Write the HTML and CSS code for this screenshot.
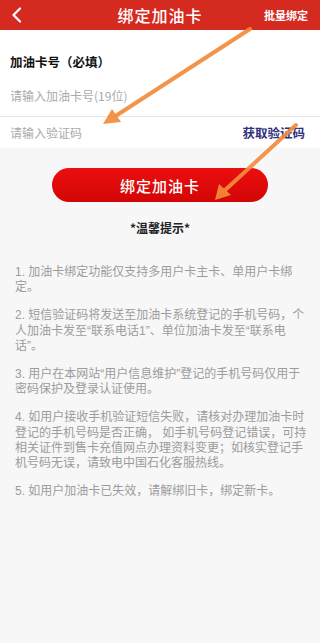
FILE: index.html
```html
<!DOCTYPE html>
<html lang="zh-CN">
<head>
<meta charset="utf-8">
<title>绑定加油卡</title>
<link rel="stylesheet" href="styles.css">
</head>
<body>
<div class="page">
  <header class="topbar">
    <span class="back">
      <svg width="12" height="16" viewBox="0 0 12 16"><path d="M9 1.5 L2.5 8 L9 14.5" fill="none" stroke="#fff" stroke-width="2.2" stroke-linecap="round" stroke-linejoin="round"/></svg>
    </span>
    <h1 class="title">绑定加油卡</h1>
    <span class="batch">批量绑定</span>
  </header>

  <section class="form">
    <div class="label">加油卡号（必填）</div>
    <div class="placeholder card">请输入加油卡号(19位)</div>
    <div class="code-row">
      <span class="placeholder">请输入验证码</span>
      <span class="getcode">获取验证码</span>
    </div>
  </section>

  <div class="btn-wrap">
    <button class="bind-btn">绑定加油卡</button>
  </div>

  <div class="tips-title">*温馨提示*</div>

  <div class="tips">
    <p>1. 加油卡绑定功能仅支持多用户卡主卡、单用户卡绑定。</p>
    <p>2. 短信验证码将发送至加油卡系统登记的手机号码，个人加油卡发至“联系电话1”、单位加油卡发至“联系电话”。</p>
    <p>3. 用户在本网站“用户信息维护”登记的手机号码仅用于密码保护及登录认证使用。</p>
    <p>4. 如用户接收手机验证短信失败，请核对办理加油卡时登记的手机号码是否正确， 如手机号码登记错误，可持相关证件到售卡充值网点办理资料变更；如核实登记手机号码无误，请致电中国石化客服热线。</p>
    <p>5. 如用户加油卡已失效，请解绑旧卡，绑定新卡。</p>
  </div>

  <svg class="annot" width="320" height="643" viewBox="0 0 320 643">
    <g stroke="#f28c3c" stroke-width="4" stroke-linecap="round" fill="#f28c3c" opacity="0.92">
      <line x1="250" y1="29" x2="114" y2="117"/>
      <polygon points="103,124 112,109 121,122" stroke="none"/>
      <line x1="296" y1="125" x2="223" y2="192"/>
      <polygon points="215,200 219,184 231,195" stroke="none"/>
    </g>
  </svg>
</div>
</body>
</html>
```

FILE: styles.css
```css
* { box-sizing: border-box; }
html, body {
  margin: 0;
  padding: 0;
}
body {
  background: #f7f7f7;
  font-family: "Noto Sans CJK SC", "Noto Sans", sans-serif;
  width: 320px;
  height: 643px;
  overflow: hidden;
}
.page {
  position: relative;
  width: 320px;
  height: 643px;
}
.topbar {
  height: 30px;
  background: #d52a20;
  display: grid;
  grid-template-columns: 1fr auto 1fr;
  align-items: center;
  color: #fff;
}
.back {
  display: flex;
  align-items: center;
  padding-left: 11px;
}
.title {
  margin: 0;
  font-size: 16px;
  font-weight: 500;
  letter-spacing: 1px;
  line-height: 30px;
}
.batch {
  justify-self: end;
  padding-right: 12px;
  font-size: 11px;
  font-weight: 700;
}
.form {
  background: #fff;
}
.label {
  padding: 24px 10px 0;
  font-size: 12.5px;
  font-weight: 700;
  color: #111;
  line-height: 16px;
}
.placeholder {
  font-size: 12px;
  color: #aaa;
  line-height: 16px;
}
.card {
  padding: 18px 10px 12px;
  border-bottom: 1px solid #e6e6e6;
}
.code-row {
  height: 31px;
  display: flex;
  align-items: center;
  justify-content: space-between;
  padding: 0 15px 0 10px;
}
.getcode {
  font-size: 12.5px;
  font-weight: 700;
  color: #2e2f7e;
}
.btn-wrap {
  padding: 20px 52px 0;
}
.bind-btn {
  display: block;
  width: 100%;
  height: 34px;
  border: none;
  border-radius: 17px;
  background: linear-gradient(#ec0e0e, #d20606);
  color: #fff;
  font-family: inherit;
  font-size: 15px;
  font-weight: 500;
  letter-spacing: 1px;
}
.tips-title {
  margin-top: 18px;
  text-align: center;
  font-size: 12px;
  font-weight: 700;
  color: #222;
  line-height: 16px;
}
.tips {
  padding: 29px 12px 0 15px;
  color: #9c9c9c;
  font-family: "Liberation Sans", "Noto Sans CJK SC", sans-serif;
  font-size: 12px;
  line-height: 15.2px;
}
.tips p {
  margin: 0 0 13px;
}
.annot {
  position: absolute;
  left: 0;
  top: 0;
  pointer-events: none;
}
```
